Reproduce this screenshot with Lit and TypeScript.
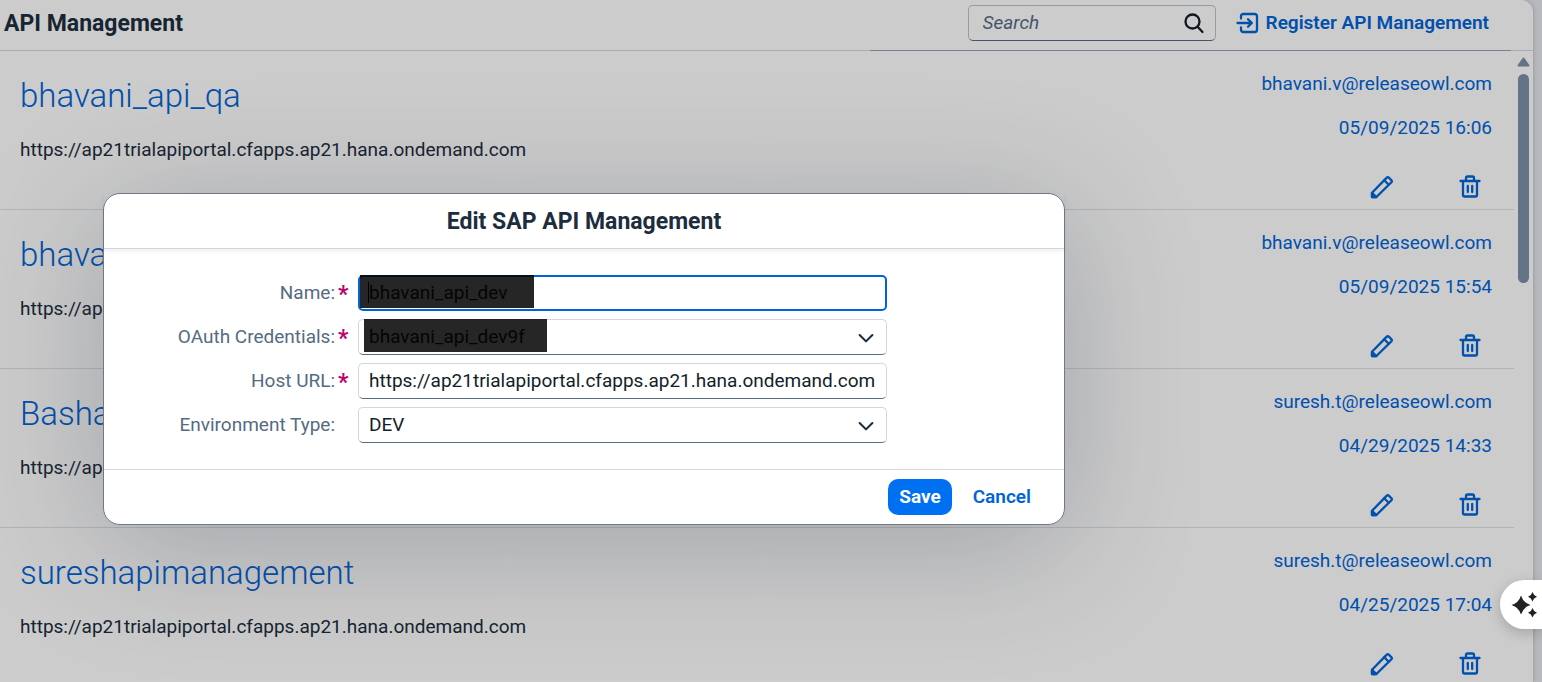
import { LitElement, html, css, svg } from "lit";
import { customElement } from "lit/decorators.js";

interface Api {
  name: string;
  url: string;
  owner: string;
  date: string;
}

const HOST = "https://ap21trialapiportal.cfapps.ap21.hana.ondemand.com";

const APIS: Api[] = [
  { name: "bhavani_api_qa", url: HOST, owner: "bhavani.v@releaseowl.com", date: "05/09/2025 16:06" },
  { name: "bhavani_api_dev", url: HOST, owner: "bhavani.v@releaseowl.com", date: "05/09/2025 15:54" },
  { name: "Basha_api", url: HOST, owner: "suresh.t@releaseowl.com", date: "04/29/2025 14:33" },
  { name: "sureshapimanagement", url: HOST, owner: "suresh.t@releaseowl.com", date: "04/25/2025 17:04" },
];

const stroke = (body: unknown, size = 24) => html`
  <svg width=${size} height=${size} viewBox="0 0 24 24" fill="none" stroke="currentColor"
    stroke-width="2.3" stroke-linecap="round" stroke-linejoin="round" aria-hidden="true">${body}</svg>`;

const searchIcon = stroke(svg`<circle cx="10.500" cy="10.500" r="7"/><path d="M15.800 16 20.500 21"/>`);
const registerIcon = stroke(svg`<path d="M5 7.5V5.2A2.2 2.2 0 0 1 7.2 3H18.800A2.200 2.200 0 0 1 21 5.200V18.800A2.200 2.200 0 0 1 18.800 21H7.200A2.200 2.200 0 0 1 5 18.800V16.500"/><path d="M1.500 12H15.500M12 8.200 15.800 12 12 15.800"/>`);
const editIcon = stroke(svg`<path d="M2 22V17.800L16.800 2.600Q17.800 1.600 18.800 2.600L21.400 5.200Q22.400 6.200 21.400 7.200L6.400 22Z"/><path d="M14.200 5.300 18.700 9.800"/><path d="M2 22V17.800L6.400 22Z" fill="currentColor"/>`);
const trashIcon = stroke(svg`<path d="M2.500 6H21.500M8 5.500V3Q8 1.500 9.500 1.500H14.500Q16 1.500 16 3V5.500M5 6V20Q5 21.500 6.500 21.500H17.500Q19 21.500 19 20V6M9.800 11V17M14.200 11V17"/>`);
const chevron = stroke(svg`<path d="M3.500 8 12 16.500 20.500 8" stroke-width="2.800"/>`, 18);

@customElement("app-root")
export class AppRoot extends LitElement {
  static styles = css`
    :host {
      display: block;
      position: relative;
      height: 100vh;
      overflow: hidden;
      background: #e7e8ec;
      color: #1d2d3e;
      font: 19px/24px Roboto, "Liberation Sans", sans-serif;
    }
    * { box-sizing: border-box; }
    svg { display: block; flex: none; }
    button, input, select { font: inherit; color: inherit; margin: 0; }
    button { border: 0; background: none; padding: 0; }
    .panel {
      display: flex;
      flex-direction: column;
      height: 100%;
      margin-right: 9px;
      background: #fff;
      border-top-right-radius: 12px;
      box-shadow: 0 0 4px rgba(34, 53, 72, 0.3);
    }
    .bar {
      position: relative;
      display: flex;
      align-items: center;
      gap: 20px;
      height: 51px;
      padding: 0 44px 5px 4px;
      border-bottom: 1px solid #d5d7da;
      flex: none;
    }
    .bar::after {
      content: "";
      position: absolute;
      left: 870px;
      right: 22px;
      bottom: -1px;
      height: 1px;
      background: #91a3b8;
    }
    .bar h1 { flex: 1; margin: 0; padding-top: 2px; font-size: 23px; line-height: 28px; font-weight: 700; }
    .search {
      display: flex;
      align-items: center;
      width: 248px;
      height: 36px;
      padding: 0 9px 0 14px;
      border: 1px solid #bcc3ca;
      border-bottom-color: #556b81;
      border-radius: 5px;
    }
    .search input { flex: 1; min-width: 0; border: 0; padding: 0; background: none; outline: 0; }
    .search input::placeholder { color: #556b82; font-style: italic; opacity: 1; }
    .search button { color: #131e29; }
    .register { display: flex; align-items: center; gap: 6px; color: #0064d9; font-weight: 600; }
    .body { display: flex; flex: 1; min-height: 0; }
    .list { flex: 1; min-width: 0; margin: 0; padding: 0; list-style: none; overflow: hidden; }
    .item {
      display: flex;
      justify-content: space-between;
      padding: 11px 22px 0 20px;
      border-bottom: 1px solid #e0e2e3;
    }
    .about { display: flex; flex-direction: column; gap: 18px; padding-top: 10px; }
    .name { font-size: 33px; line-height: 48px; font-weight: 300; color: #0064d9; text-decoration: none; }
    .side { display: flex; flex-direction: column; align-items: flex-end; color: #0064d9; line-height: 44px; }
    .actions { display: flex; gap: 44px; margin-top: 15px; }
    .actions button { display: grid; place-items: center; width: 44px; height: 44px; color: #0064d9; }
    .scroll { display: flex; flex-direction: column; align-items: center; gap: 7px; width: 19px; padding-top: 6px; }
    .thumb { width: 11px; height: 209px; border-radius: 6px; background: #7b91a8; }
    .shade { position: absolute; inset: 0; background: rgba(0, 0, 0, 0.2); }
    .dialog {
      position: absolute;
      top: 193px;
      left: 103px;
      width: calc(100% - 580px);
      min-width: 800px;
      background: #fff;
      border: 1px solid #6f7a87;
      border-radius: 17px;
      box-shadow: 0 20px 128px rgba(34, 43, 62, 0.25);
    }
    .dialog h2 {
      margin: 0;
      padding: 14px 0 12px;
      border-bottom: 1px solid #d3d5d8;
      box-shadow: 0 2px 4px rgba(34, 53, 72, 0.08);
      text-align: center;
      font-size: 23px;
      line-height: 28px;
      font-weight: 700;
    }
    .form {
      display: grid;
      grid-template-columns: 244px 1fr;
      gap: 8px 10px;
      align-items: center;
      padding: 26px 177px 26px 0;
    }
    .form label { display: flex; justify-content: flex-end; align-items: center; gap: 3px; color: #556b82; }
    .mark { width: 10px; padding-top: 4px; color: #ba066c; font-weight: 700; font-size: 23px; }
    .field { position: relative; height: 36px; }
    .control {
      width: 100%;
      height: 36px;
      padding: 0 10px;
      border: 1px solid #d0d7de;
      border-bottom-color: #556b82;
      border-radius: 5px;
      background: #fff;
      color: #131e29;
      outline: 0;
      appearance: none;
    }
    input.control { padding-bottom: 2px; }
    .control.active { border: 2px solid #0064d9; padding: 0 9px 2px; }
    .field svg { position: absolute; top: 10px; right: 12px; pointer-events: none; }
    .mask { position: absolute; top: 0; left: 2px; width: 174px; height: 33px; background: rgba(0, 0, 0, 0.85); }
    .mask.wide { left: 6px; width: 183px; }
    .caret::before { content: ""; position: absolute; top: 7px; left: 8px; width: 1px; height: 21px; background: #000; }
    footer {
      display: flex;
      justify-content: flex-end;
      gap: 10px;
      padding: 9px 22px;
      border-top: 1px solid #d9d9d9;
      font-weight: 600;
    }
    footer button { height: 36px; padding: 0 11px; border-radius: 10px; color: #0064d9; }
    footer .save { background: #0070f2; color: #fff; font-weight: 700; }
    .assist {
      position: absolute;
      right: 0;
      bottom: 53px;
      display: flex;
      align-items: center;
      width: 42px;
      height: 49px;
      padding-left: 11px;
      border-radius: 25px 0 0 25px;
      background: #fff;
      color: #222;
      box-shadow: 0 4px 14px rgba(0, 0, 0, 0.2);
    }
  `;

  private row(api: Api) {
    return html`
      <li class="item">
        <div class="about">
          <a class="name" href="#">${api.name}</a>
          <span>${api.url}</span>
        </div>
        <div class="side">
          <span>${api.owner}</span>
          <span>${api.date}</span>
          <div class="actions">
            <button aria-label="Edit">${editIcon}</button>
            <button aria-label="Delete">${trashIcon}</button>
          </div>
        </div>
      </li>`;
  }

  render() {
    return html`
      <main class="panel">
        <header class="bar">
          <h1>API Management</h1>
          <div class="search">
            <input type="search" placeholder="Search" aria-label="Search" />
            <button aria-label="Search">${searchIcon}</button>
          </div>
          <button class="register">${registerIcon}<span>Register API Management</span></button>
        </header>
        <div class="body">
          <ul class="list">${APIS.map((a) => this.row(a))}</ul>
          <div class="scroll" aria-hidden="true">
            <svg width="13" height="10" viewBox="0 0 13 10"><path d="M6.500 1.500 11.500 8.500H1.500Z" fill="#7b91a8" stroke="#7b91a8" stroke-width="2" stroke-linejoin="round"/></svg>
            <div class="thumb"></div>
          </div>
        </div>
      </main>
      <div class="shade"></div>
      <section class="dialog" role="dialog" aria-labelledby="title">
        <h2 id="title">Edit SAP API Management</h2>
        <div class="form">
          <label for="name">Name:<span class="mark">*</span></label>
          <div class="field">
            <input class="control active" id="name" .value=${"bhavani_api_dev"} />
            <span class="mask caret"></span>
          </div>
          <label for="cred">OAuth Credentials:<span class="mark">*</span></label>
          <div class="field">
            <select class="control" id="cred"><option>bhavani_api_dev9f</option></select>
            ${chevron}
            <span class="mask wide"></span>
          </div>
          <label for="host">Host URL:<span class="mark">*</span></label>
          <div class="field"><input class="control" id="host" .value=${HOST} /></div>
          <label for="env">Environment Type:<span class="mark"></span></label>
          <div class="field">
            <select class="control" id="env"><option>DEV</option></select>
            ${chevron}
          </div>
        </div>
        <footer>
          <button class="save">Save</button>
          <button>Cancel</button>
        </footer>
      </section>
      <button class="assist" aria-label="Assistant">
        <svg width="28" height="28" viewBox="0 0 28 28" fill="currentColor" aria-hidden="true">
          <path d="M10 4.500Q12.200 11.800 19.500 14Q12.200 16.200 10 23.500Q7.800 16.200 .500 14Q7.800 11.800 10 4.500Z"/>
          <path d="M21.500 1Q22.500 4.500 26 5.800Q22.500 7 21.500 10.500Q20.500 7 17 5.800Q20.500 4.500 21.500 1Z"/>
          <path d="M21.500 17Q22.500 20.500 26 21.800Q22.500 23 21.500 26.500Q20.500 23 17 21.800Q20.500 20.500 21.500 17Z"/>
        </svg>
      </button>`;
  }
}
